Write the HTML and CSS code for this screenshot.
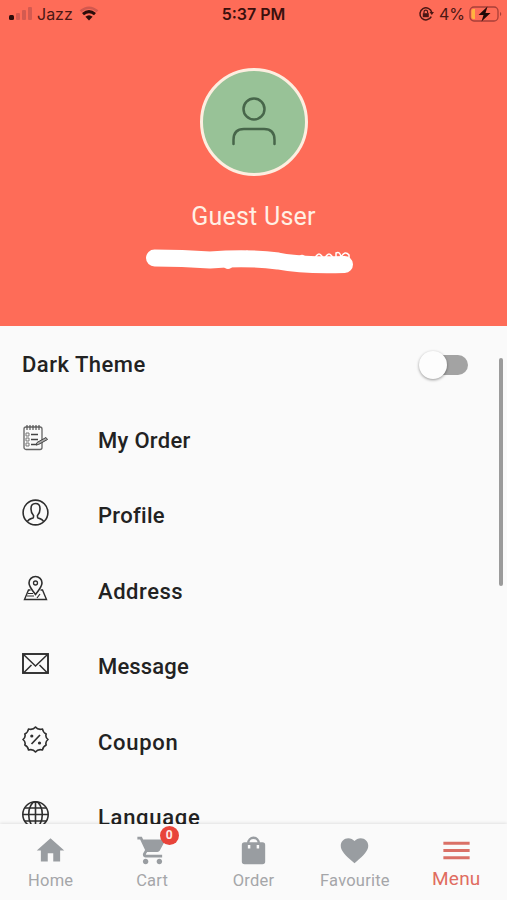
FILE: index.html
```html
<!DOCTYPE html>
<html lang="en">
<head>
    <meta charset="UTF-8">
    <meta name="viewport" content="width=device-width, initial-scale=1.0">
    <title>Menu</title>
    <link rel="stylesheet" href="styles.css">
</head>
<body>
    <div class="app">
        <header class="header">
            <div class="status-bar">
                <div class="status-left">
                    <svg width="26" height="16" viewBox="0 0 26 16">
                        <rect x="1" y="9" width="5" height="5" rx="1.5" fill="#2b0d0b"/>
                        <g fill="#d45a50"><rect x="8" y="7" width="4" height="7" rx="1"/><rect x="14" y="4" width="4" height="10" rx="1"/><rect x="20" y="1" width="4" height="13" rx="1"/></g>
                    </svg>
                    <span class="carrier">Jazz</span>
                    <svg class="wifi" width="20" height="16" viewBox="0 0 20 16" fill="none" stroke-width="2.6">
                        <path d="M1.5 5.3Q10-1.8 18.5 5.3" stroke="#d2584e"/>
                        <path d="M4 8.2Q10 3 16 8.2" stroke="#2b0d0b" stroke-width="3"/>
                        <path d="M6.4 10.8Q10 7.8 13.6 10.8L10 14.5z" fill="#2b0d0b"/>
                    </svg>
                </div>
                <div class="status-time">5:37 PM</div>
                <div class="status-right">
                    <svg width="16" height="16" viewBox="0 0 16 16" fill="none" stroke="#4b1714">
                        <path d="M13.3 10.6A6 6 0 1 1 13.8 6.5" stroke-width="1.5"/>
                        <path d="M11.5 6h4.5l-2.2 3z" fill="#4b1714" stroke="none"/>
                        <path d="M4.8 7.2h6v4h-6z" fill="#4b1714" stroke="none"/>
                        <path d="M6 7.5V6a1.8 1.8 0 0 1 3.6 0v1.5" stroke-width="1.2"/>
                    </svg>
                    <span class="percent">4%</span>
                    <svg width="33" height="18" viewBox="0 0 33 18">
                        <rect x="1" y="2" width="28" height="14" rx="4" fill="none" stroke="#a83f38" stroke-width="1.3"/>
                        <path d="M4 4h2v10H4a2 2 0 0 1-1.5-2V6A2 2 0 0 1 4 4z" fill="#ffb340"/>
                        <path d="M31 7a2.2 2.2 0 0 1 0 4z" fill="#a83f38"/>
                        <path d="M18.5 1.500L9.500 10h5l-2 6.500L21.500 8h-5z" fill="#200908"/>
                    </svg>
                </div>
            </div>
            <div class="avatar">
                <svg width="46" height="52" viewBox="0 0 46 52" fill="none" stroke="#47664a" stroke-width="2.5" stroke-linecap="round">
                    <circle cx="23" cy="13" r="10.5"/>
                    <path d="M2.500 48V44Q2.500 33 13 33H33Q43.500 33 43.500 44V48"/>
                </svg>
            </div>
            <div class="user-name"><span>Guest User</span></div>
            <svg class="scribble" width="212" height="30" viewBox="0 0 212 30">
                <path d="M10.500 13Q38 13 66 15Q104 12 134 16Q160 21 200.500 19.500" fill="none" stroke="#fff" stroke-width="17" stroke-linecap="round" stroke-linejoin="round"/>
                <path d="M78 20q6 8 12 0M101 8l2-3 2 3" fill="#fff"/>
                <path d="M155 12q3-3 6 0M171 13q4-8 8 0M181 13q4-8 8 0M192 13v-5q4-2 5 4q4-7 8-2v6" fill="none" stroke="#fff" stroke-width="1.500"/>
            </svg>
        </header>

        <main class="menu">
            <div class="row theme-row">
                <span class="label dark-theme">Dark Theme</span>
                <div class="switch"><div class="knob"></div></div>
            </div>
            <div class="row">
                <svg class="icon" viewBox="0 0 28 28">
                    <rect x="2" y="3" width="18" height="22.5" rx="2" stroke="#666" stroke-width="1.3"/>
                    <path d="M5 1v5M8 1v5M11 1v5M14 1v5M17 1v5" stroke="#555" stroke-width="1.2"/>
                    <path d="M4 9h3v3H4zM4 14h3v3H4zM4 19h3v3H4z" stroke="#777" stroke-width="1"/>
                    <path d="M9 10.500h7M9 15.500h7M9 20.500h6" stroke="#444" stroke-width="1.5"/>
                    <path d="M14 21l1-2.500 9-5 1.500 2-9 5z" fill="#aaa" stroke="#444" stroke-width="1"/>
                </svg>
                <span class="label my-order">My Order</span>
            </div>
            <div class="row">
                <svg class="icon" viewBox="0 0 28 28">
                    <circle cx="13.5" cy="13.5" r="12.4"/>
                    <path d="M5.500 22.500Q6 20.500 11 19Q11.700 18.500 11.500 16.500Q8.800 14 9 9.500Q9 4.500 13.500 4.500T18 9.500Q18.200 14 15.500 16.500Q15.300 18.500 16 19Q21 20.500 21.500 22.500"/>
                </svg>
                <span class="label profile">Profile</span>
            </div>
            <div class="row">
                <svg class="icon" viewBox="0 0 28 28">
                    <path d="M13.500 19.500Q7 11.500 7 8A6.500 6.500 0 0 1 20 8Q20 11.500 13.500 19.500z"/>
                    <circle cx="13.5" cy="8" r="2" stroke-width="1.3"/>
                    <path d="M8.500 15H6.500L2.500 24.500H24.500L20.500 15H18.500" stroke-width="1.4"/>
                    <path d="M6 18.500h5M5 21h7M15 23l3-4" stroke-width="1.2"/>
                </svg>
                <span class="label address">Address</span>
            </div>
            <div class="row">
                <svg class="icon" viewBox="0 0 28 28">
                    <rect x="1" y="4" width="25" height="19" stroke-width="1.9"/>
                    <path d="M1.500 4.500L13.500 16L25.500 4.500M2 22.500L9.500 15M25 22.500L17.500 15" stroke-width="1.5"/>
                </svg>
                <span class="label message">Message</span>
            </div>
            <div class="row">
                <svg class="icon" viewBox="0 0 28 28">
                    <path d="M13.500 1Q16 4.200 20.500 3Q21 6.500 24.200 8Q23 11 26 13.500Q23 16 24.200 19Q21 20.500 20.500 24Q16 22.800 13.500 26Q11 22.800 6.500 24Q6 20.500 2.800 19Q4 16 1 13.500Q4 11 2.800 8Q6 6.500 6.500 3Q11 4.200 13.500 1z" stroke-linejoin="round"/>
                    <path d="M9.500 18l8.500-9" stroke-width="1.7"/>
                    <circle class="dot" cx="9.8" cy="10" r="1.6"/>
                    <circle class="dot" cx="17.5" cy="17" r="1.6"/>
                </svg>
                <span class="label coupon">Coupon</span>
            </div>
            <div class="row">
                <svg class="icon" viewBox="0 0 28 28">
                    <circle cx="13.5" cy="13.5" r="12.7"/>
                    <ellipse cx="13.5" cy="13.5" rx="6.8" ry="12.7"/>
                    <path d="M13.500 1v25M1 13.500h25M3 7h21M3 20h21"/>
                </svg>
                <span class="label language">Language</span>
            </div>
            <div class="scrollbar"></div>
        </main>

        <nav class="tabs">
            <div class="tab">
                <svg width="33" height="33" viewBox="0 0 24 24"><path d="M10 20v-6h4v6h5v-8h3L12 3 2 12h3v8z"/></svg>
                <span class="home">Home</span>
            </div>
            <div class="tab">
                <div class="cart-icon">
                    <svg width="33" height="33" viewBox="0 0 24 24"><path d="M7 18c-1.100 0-1.990.9-1.990 2S5.900 22 7 22s2-.9 2-2-.9-2-2-2zM1 2v2h2l3.600 7.590-1.350 2.450c-.16.280-.25.610-.25.960 0 1.100.9 2 2 2h12v-2H7.420c-.14 0-.25-.11-.25-.25l.03-.12.9-1.630h7.450c.75 0 1.410-.41 1.750-1.030l3.580-6.490c.08-.14.120-.31.120-.48 0-.55-.45-1-1-1H5.210l-.94-2H1zm16 16c-1.100 0-1.990.9-1.990 2s.89 2 1.990 2 2-.9 2-2-.9-2-2-2z"/></svg>
                    <span class="badge">0</span>
                </div>
                <span class="cart">Cart</span>
            </div>
            <div class="tab">
                <svg width="33" height="33" viewBox="0 0 24 24">
                    <path d="M5.500 6H18.500A2 2 0 0 1 20.500 8V20A2 2 0 0 1 18.500 22H5.500A2 2 0 0 1 3.500 20V8A2 2 0 0 1 5.500 6z"/>
                    <path class="handle" d="M8.200 7V6.500A3.800 3.800 0 0 1 15.800 6.500V7"/>
                    <path class="eyelet" d="M8.800 8v2.500M15.200 8v2.500"/>
                </svg>
                <span class="order">Order</span>
            </div>
            <div class="tab">
                <svg width="33" height="33" viewBox="0 0 24 24"><path d="M12 21.350l-1.450-1.320C5.400 15.360 2 12.280 2 8.500 2 5.420 4.420 3 7.500 3c1.740 0 3.410.81 4.500 2.090C13.090 3.810 14.760 3 16.500 3 19.580 3 22 5.420 22 8.500c0 3.780-3.400 6.860-8.550 11.540L12 21.350z"/></svg>
                <span class="favourite">Favourite</span>
            </div>
            <div class="tab active">
                <svg width="35" height="35" viewBox="0 0 24 24"><path d="M3 18h18v-2H3v2zm0-5h18v-2H3v2zm0-7v2h18V6H3z"/></svg>
                <span class="menu-tab">Menu</span>
            </div>
        </nav>
    </div>
</body>
</html>
```
FILE: styles.css
```css
* { box-sizing: border-box; }
body {
    margin: 0;
    font-family: Roboto, "Liberation Sans", sans-serif;
    background-color: #fafafa;
}
.app {
    display: flex;
    flex-direction: column;
    width: 507px;
    height: 900px;
    overflow: hidden;
}

/* header */
.header {
    flex: none;
    display: flex;
    flex-direction: column;
    align-items: center;
    height: 326px;
    background-color: #fe6c58;
}
.status-bar {
    display: grid;
    grid-template-columns: 1fr auto 1fr;
    align-items: center;
    width: 100%;
    height: 28px;
    padding: 0 6px 0 8px;
    font-family: Inter, sans-serif;
    font-size: 16px;
    color: #4b1714;
}
.status-left, .status-right { display: flex; align-items: center; }
.status-left { gap: 3px; }
.status-right { justify-content: flex-end; gap: 5px; margin-right: -1px; }
.carrier { letter-spacing: 0; }
.wifi { margin-left: 3px; }
.status-time { margin-left: -2px; font-weight: 600; color: #3a100d; }
.percent { margin-right: -1px; }
.avatar {
    display: flex;
    align-items: center;
    justify-content: center;
    width: 108px;
    height: 108px;
    margin-top: 40px;
    border: 3px solid #fdeee0;
    border-radius: 50%;
    background-color: #98c297;
}
.user-name {
    margin-top: 26px;
    font-size: 25px;
    line-height: 30px;
    letter-spacing: 0.25px;
    color: #fff0e4;
}
.scribble { margin: 13px 0 0 -8px; }

/* menu list */
.menu {
    position: relative;
    flex: 1;
    min-height: 0;
    padding-top: 1px;
    overflow: hidden;
}
.row {
    display: flex;
    align-items: center;
    height: 75.5px;
    padding-left: 22px;
}
.theme-row { justify-content: space-between; padding-right: 39px; }
.icon {
    width: 28px;
    height: 28px;
    margin: -5px 48px 0 0;
    fill: none;
    stroke: #2e2e2e;
    stroke-width: 1.6;
}
.dot { fill: #2e2e2e; stroke: none; }
.label {
    font-size: 22px;
    font-weight: 500;
    letter-spacing: 0.5px;
    color: #222;
}
.my-order { letter-spacing: 0.3px; }
.profile { letter-spacing: 0.3px; }
.address { letter-spacing: 0.55px; }
.message { letter-spacing: 0.15px; }
.coupon, .language { letter-spacing: 0.7px; }
.switch {
    display: flex;
    align-items: center;
    width: 46px;
    height: 20px;
    border-radius: 10px;
    background-color: #a3a3a3;
}
.knob {
    flex: none;
    width: 28px;
    height: 28px;
    margin-left: -3px;
    border-radius: 50%;
    background-color: #fdfdfd;
    box-shadow: 0 1px 3px rgba(0, 0, 0, 0.4);
}
.scrollbar {
    position: absolute;
    top: 32px;
    right: 4px;
    width: 4px;
    height: 228px;
    border-radius: 2px;
    background-color: #9b9b9b;
}

/* bottom tabs */
.tabs {
    position: relative;
    flex: none;
    display: grid;
    grid-template-columns: repeat(5, 1fr);
    height: 76px;
    background-color: #fafafa;
    box-shadow: 0 -1px 3px rgba(0, 0, 0, 0.1);
}
.tab {
    display: flex;
    flex-direction: column;
    align-items: center;
    padding-top: 10px;
    font-size: 16.5px;
    line-height: 20px;
    letter-spacing: 0.2px;
    color: #a5a6a9;
    fill: #999da1;
}
.tab > span { margin-top: 4px; }
.cart-icon { position: relative; height: 33px; }
.badge {
    position: absolute;
    top: -8px;
    right: -10px;
    width: 19px;
    height: 19px;
    border-radius: 50%;
    background-color: #e8443a;
    font-size: 12px;
    font-weight: 700;
    line-height: 19px;
    letter-spacing: 0;
    text-align: center;
    color: #ffeceb;
}
.handle { fill: none; stroke: #999da1; stroke-width: 1.7; }
.eyelet { stroke: #fafafa; stroke-width: 1.8; }
.active {
    padding-top: 9px;
    font-size: 19px;
    color: #e06c60;
    fill: #da7066;
}
.active > span { margin-top: 1px; }
```
